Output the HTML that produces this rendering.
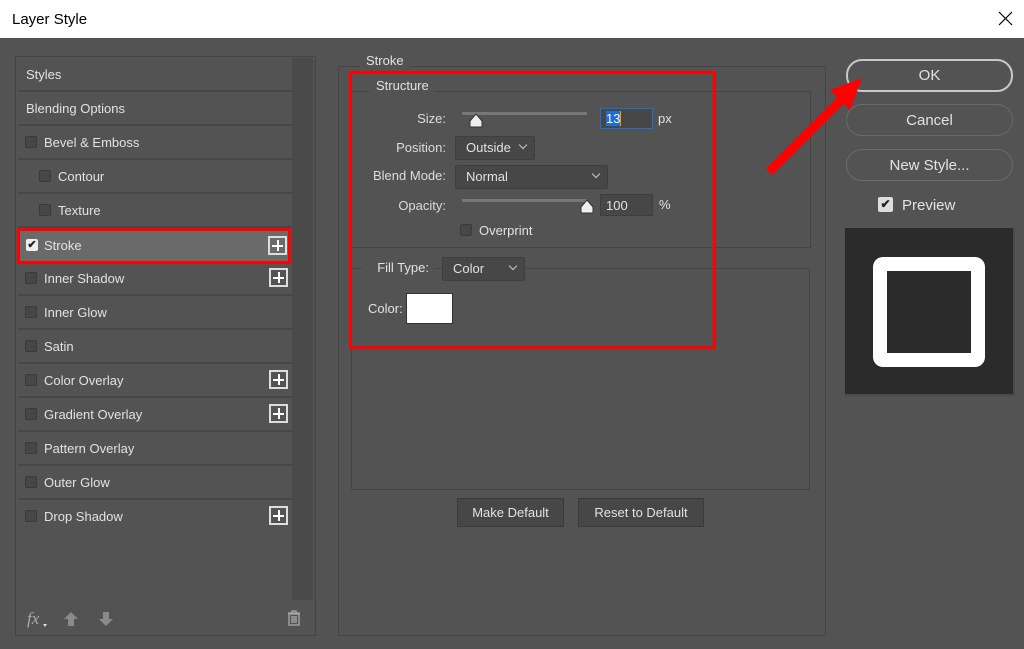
<!DOCTYPE html>
<html><head><style>
*{box-sizing:border-box;margin:0;padding:0}
body{width:1024px;height:649px;background:#535353;font-family:"Liberation Sans",sans-serif;font-size:13px;color:#e2e2e2;position:relative;overflow:hidden}
.a{position:absolute}
.title{left:0;top:0;width:1024px;height:38px;background:#fff;color:#000;font-size:15px}
.row{position:absolute;left:18px;width:274px;height:34px;border-bottom:2px solid #474747;line-height:33px}
.cb{position:absolute;width:12px;height:12px;border:1px solid #3a3a3a;background:#474747;border-radius:2px}
.plus{position:absolute;left:251px;top:6px;width:19px;height:19px;border:2px solid #ddd;color:#fff}
.plus:before{content:"";position:absolute;left:7px;top:2px;width:2px;height:11px;background:#fff}
.plus:after{content:"";position:absolute;left:2px;top:7px;width:11px;height:2px;background:#fff}
.box{position:absolute;border:1px solid #444}
.lbl{position:absolute;text-align:right;color:#dcdcdc}
.sel{position:absolute;background:#474747;border:1px solid #3e3e3e;border-radius:2px;line-height:22px;padding-left:10px}
.sel i{position:absolute;right:8px;top:5px;width:6px;height:6px;border-right:1px solid #ccc;border-bottom:1px solid #ccc;transform:rotate(45deg)}
.btn{position:absolute;border:1px solid #6a6a6a;border-radius:16px;text-align:center;line-height:32px;font-size:15px}
.pb{position:absolute;background:#474747;border:1px solid #3a3a3a;text-align:center;line-height:27px}
</style></head><body>
<div class="a title"><span class="a" style="left:12px;top:11px">Layer Style</span><svg class="a" style="left:998px;top:11px" width="15" height="15"><path d="M1 1L14 14M14 1L1 14" stroke="#000" stroke-width="1.2"/></svg></div>

<div class="box" style="left:15px;top:56px;width:301px;height:580px;background:#535353"></div>
<div class="a" style="left:292px;top:58px;width:21px;height:542px;background:#4a4a4a"></div>
<div class="row" style="top:58px;padding-left:8px">Styles</div>
<div class="row" style="top:92px;padding-left:8px">Blending Options</div>
<div class="row" style="top:126px"><div class="cb" style="left:7px;top:10px"></div><span class="a" style="left:26px">Bevel &amp; Emboss</span></div>
<div class="row" style="top:160px"><div class="cb" style="left:21px;top:10px"></div><span class="a" style="left:40px">Contour</span></div>
<div class="row" style="top:194px"><div class="cb" style="left:21px;top:10px"></div><span class="a" style="left:40px">Texture</span></div>
<div class="row" style="top:228px;background:#6a6a6a;border:3px solid #f00;left:17px;height:36px;line-height:29px"><div class="cb" style="left:6px;top:8px;background:#eee;border-color:#eee;color:#222;font-size:11px;line-height:10px;text-align:center;font-weight:bold">✔</div><span class="a" style="left:24px">Stroke</span><div class="plus" style="left:248px;top:5px"></div></div>
<div class="row" style="top:262px"><div class="cb" style="left:7px;top:10px"></div><span class="a" style="left:26px">Inner Shadow</span><div class="plus"></div></div>
<div class="row" style="top:296px"><div class="cb" style="left:7px;top:10px"></div><span class="a" style="left:26px">Inner Glow</span></div>
<div class="row" style="top:330px"><div class="cb" style="left:7px;top:10px"></div><span class="a" style="left:26px">Satin</span></div>
<div class="row" style="top:364px"><div class="cb" style="left:7px;top:10px"></div><span class="a" style="left:26px">Color Overlay</span><div class="plus"></div></div>
<div class="row" style="top:398px"><div class="cb" style="left:7px;top:10px"></div><span class="a" style="left:26px">Gradient Overlay</span><div class="plus"></div></div>
<div class="row" style="top:432px"><div class="cb" style="left:7px;top:10px"></div><span class="a" style="left:26px">Pattern Overlay</span></div>
<div class="row" style="top:466px"><div class="cb" style="left:7px;top:10px"></div><span class="a" style="left:26px">Outer Glow</span></div>
<div class="row" style="top:500px;border-bottom:none"><div class="cb" style="left:7px;top:10px"></div><span class="a" style="left:26px">Drop Shadow</span><div class="plus"></div></div>
<span class="a" style="left:27px;top:609px;font-style:italic;font-size:17px;color:#aaa;font-family:'Liberation Serif',serif">fx</span>
<span class="a" style="left:43px;top:624px;width:0;height:0;border:2px solid transparent;border-top:3px solid #ddd"></span>
<svg class="a" style="left:63px;top:611px" width="16" height="16"><path d="M8 1L15 8H11V15H5V8H1Z" fill="#8a8a8a"/></svg>
<svg class="a" style="left:98px;top:611px" width="16" height="16"><path d="M8 15L15 8H11V1H5V8H1Z" fill="#8a8a8a"/></svg>
<svg class="a" style="left:286px;top:609px" width="16" height="18"><path d="M2 4H14M6 4V2H10V4M3 5H13V16H3ZM6 7V14M8 7V14M10 7V14" stroke="#aaa" stroke-width="1.3" fill="none"/></svg>

<div class="box" style="left:338px;top:66px;width:488px;height:570px"></div>
<span class="a" style="left:360px;top:53px;background:#535353;padding:0 6px">Stroke</span>
<div class="box" style="left:351px;top:91px;width:460px;height:157px"></div>
<span class="a" style="left:370px;top:78px;background:#535353;padding:0 6px">Structure</span>
<div class="box" style="left:351px;top:268px;width:459px;height:222px"></div>
<div class="lbl" style="left:380px;top:111px;width:66px">Size:</div>
<div class="a" style="left:462px;top:112px;width:125px;height:3px;background:#777"></div>
<svg class="a" style="left:468px;top:113px" width="16" height="16"><path d="M8 1L14 8V14H2V8Z" fill="#eee" stroke="#333"/></svg>
<div class="a" style="left:600px;top:108px;width:53px;height:21px;background:#474747;border:1px solid #1e6fd0;padding:2px 5px"><span style="background:#1e6fd0;color:#fff">13</span><span style="border-left:1px solid #f90"></span></div>
<span class="a" style="left:658px;top:111px">px</span>
<div class="lbl" style="left:380px;top:140px;width:66px">Position:</div>
<div class="sel" style="left:455px;top:136px;width:80px;height:24px">Outside<i></i></div>
<div class="lbl" style="left:360px;top:168px;width:86px">Blend Mode:</div>
<div class="sel" style="left:455px;top:165px;width:153px;height:24px">Normal<i></i></div>
<div class="lbl" style="left:380px;top:198px;width:66px">Opacity:</div>
<div class="a" style="left:462px;top:199px;width:125px;height:3px;background:#777"></div>
<svg class="a" style="left:579px;top:199px" width="16" height="16"><path d="M8 1L14 8V14H2V8Z" fill="#eee" stroke="#333"/></svg>
<div class="a" style="left:600px;top:194px;width:53px;height:22px;background:#474747;border:1px solid #3e3e3e;padding:3px 5px">100</div>
<span class="a" style="left:659px;top:197px">%</span>
<div class="cb" style="left:460px;top:224px"></div>
<span class="a" style="left:479px;top:223px">Overprint</span>
<span class="a" style="left:362px;top:260px;background:#535353;padding:0 5px 0 4px;line-height:16px;width:72px;text-align:right">Fill Type:</span>
<div class="sel" style="left:442px;top:257px;width:83px;height:24px;background:#474747">Color<i></i></div>
<span class="a" style="left:368px;top:301px">Color:</span>
<div class="a" style="left:406px;top:293px;width:47px;height:31px;background:#fff;border:1px solid #333"></div>
<div class="a" style="left:349px;top:71px;width:367px;height:278px;border:3px solid #f00"></div>
<div class="pb" style="left:457px;top:498px;width:107px;height:29px">Make Default</div>
<div class="pb" style="left:578px;top:498px;width:126px;height:29px">Reset to Default</div>

<div class="btn" style="left:846px;top:59px;width:167px;height:33px;border:2px solid #c8c8c8;line-height:30px">OK</div>
<div class="btn" style="left:846px;top:104px;width:167px;height:32px">Cancel</div>
<div class="btn" style="left:846px;top:149px;width:167px;height:32px">New Style...</div>
<div class="cb" style="left:878px;top:197px;width:15px;height:15px;background:#ddd;border-color:#ddd;color:#222;font-size:12px;line-height:13px;text-align:center;font-weight:bold">✔</div>
<span class="a" style="left:902px;top:197px;font-size:15px">Preview</span>
<div class="a" style="left:845px;top:228px;width:170px;height:168px;background:#2b2b2b;border-right:2px solid #4a4a4a;border-bottom:2px solid #4a4a4a"></div>
<div class="a" style="left:873px;top:257px;width:112px;height:110px;border:14px solid #fff;border-radius:10px;background:#2b2b2b"></div>
<svg class="a" style="left:760px;top:70px" width="110" height="110"><path d="M9 102L88 23" stroke="#f00" stroke-width="9"/><path d="M102 8L70 20L90 40Z" fill="#f00"/></svg>
</body></html>
